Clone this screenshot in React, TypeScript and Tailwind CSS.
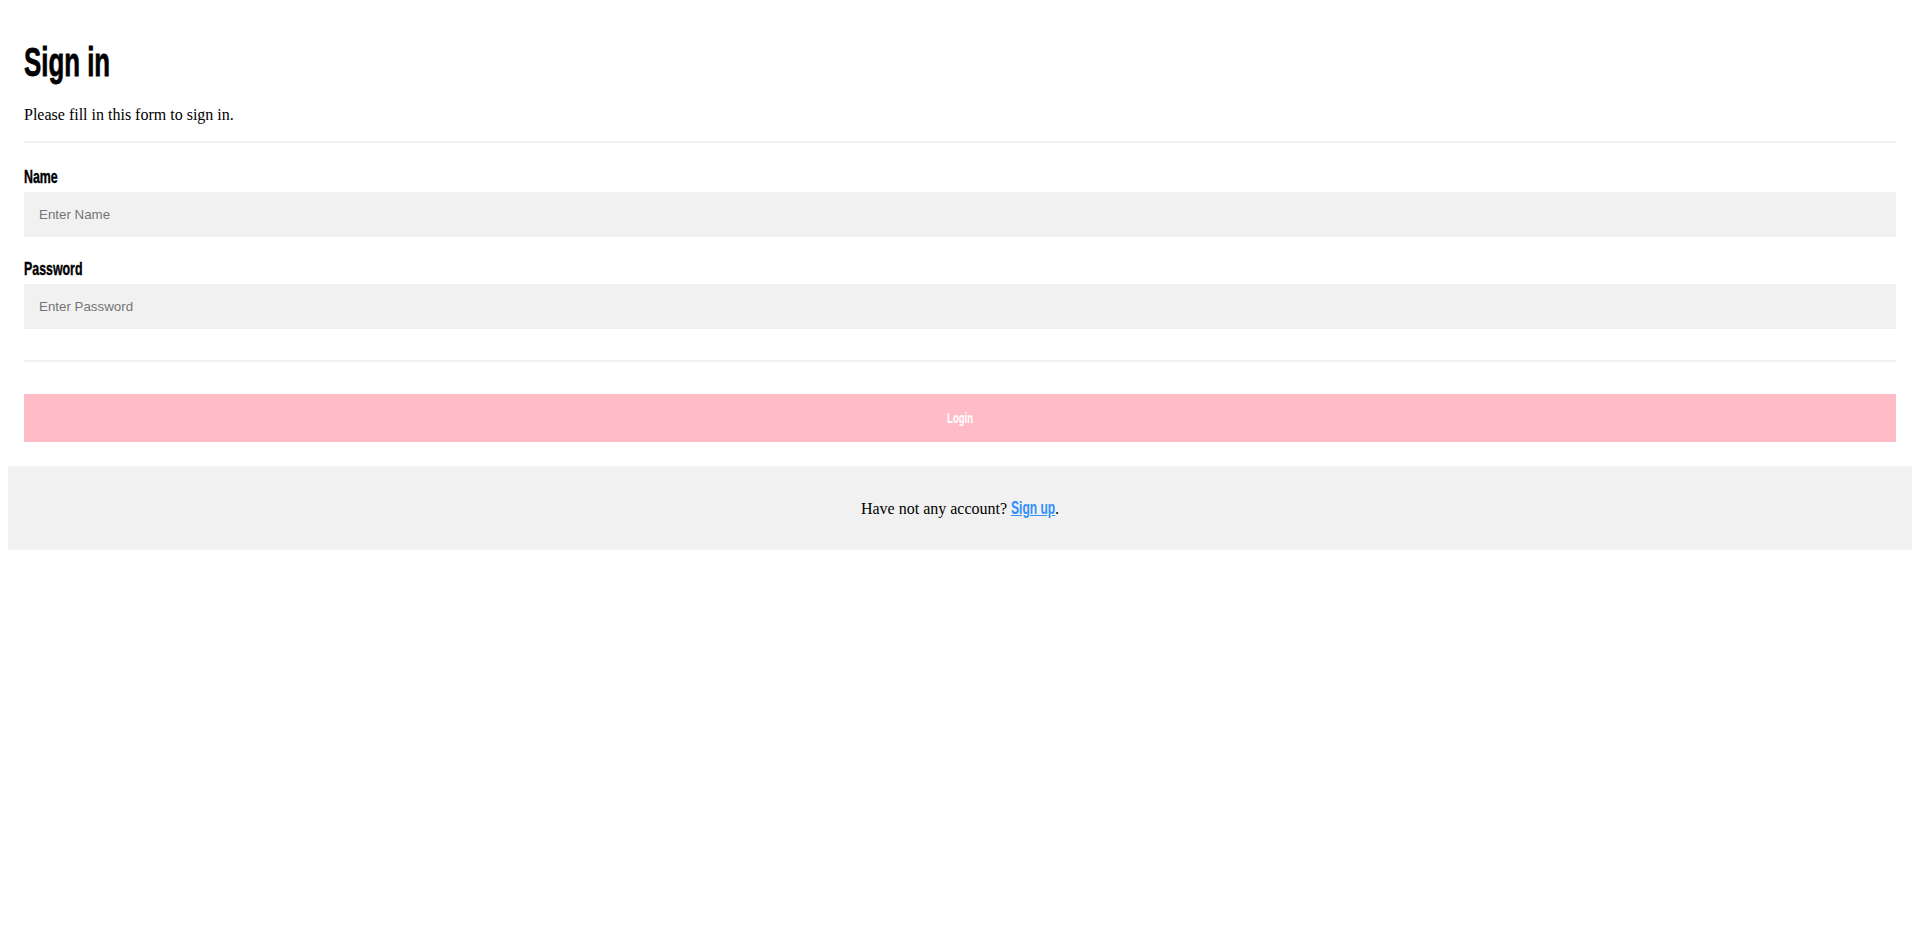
import { useState } from "react";

// condensed display face (Fjalla-ish): Arial-metric bold squeezed horizontally
const COND = "font-['Liberation_Sans',Arial,sans-serif] font-bold";

function Field({
  label, placeholder, type, value, onChange, labelTop, inputTop,
}: {
  label: string; placeholder: string; type: string; value: string;
  onChange: (v: string) => void; labelTop: string; inputTop: string;
}) {
  return (
    <>
      <label className={`block h-5 whitespace-nowrap text-[17.7px] leading-5 text-black [-webkit-text-stroke:0.4px_black] ${labelTop} ${COND}`}>
        <span className="inline-block origin-left scale-x-[0.7]">{label}</span>
      </label>
      <input
        type={type}
        value={value}
        onChange={(e) => onChange(e.target.value)}
        placeholder={placeholder}
        className={`block h-[45px] w-full border-none bg-[#f1f1f1] px-[15px] font-['Liberation_Sans',Arial,sans-serif] text-[13.333px] text-black outline-none placeholder:text-[#757575] ${inputTop}`}
      />
    </>
  );
}

export default function App() {
  const [name, setName] = useState("");
  const [pass, setPass] = useState("");

  return (
    <div className="min-h-[931px] bg-white pt-2 font-['Liberation_Serif','Times_New_Roman',serif] text-base text-black">
      <form className="ml-2 w-[1904px]" onSubmit={(e) => e.preventDefault()}>
        <div className="p-4">
          <h1 className={`mt-[18px] h-10 whitespace-nowrap text-[41px] leading-10 [-webkit-text-stroke:0.8px_black] ${COND}`}>
            <span className="inline-block origin-left scale-x-[0.63]">Sign in</span>
          </h1>
          <p className="mt-6 h-[18px] leading-[18px]">Please fill in this form to sign in.</p>
          <hr className="mt-[17px] h-[2px] border-none bg-[#f1f1f1]" />

          <Field
            label="Name" placeholder="Enter Name" type="text"
            value={name} onChange={setName}
            labelTop="mt-6" inputTop="mt-[5px]"
          />
          <Field
            label="Password" placeholder="Enter Password" type="password"
            value={pass} onChange={setPass}
            labelTop="mt-[22px]" inputTop="mt-[5px]"
          />

          <hr className="mt-[31px] h-[2px] border-none bg-[#f1f1f1]" />

          <button
            type="submit"
            className={`mt-8 flex h-12 w-full items-center justify-center bg-[#ffbcc6] text-[14px] text-white ${COND}`}
          >
            <span className="inline-block scale-x-[0.68]">Login</span>
          </button>
        </div>

        <div className="mt-2 flex h-[84px] items-center justify-center bg-[#f1f1f1] leading-[18px]">
          <p className="whitespace-nowrap">
            Have not any account?{" "}
            <a href="#" className="text-[#2f8fff]">
              <span className="inline-block w-[44px] leading-none">
                <span className={`inline-block origin-left scale-x-[0.67] whitespace-nowrap text-[18px] leading-none underline ${COND}`}>
                  Sign up
                </span>
              </span>
            </a>
            .
          </p>
        </div>
      </form>
    </div>
  );
}
